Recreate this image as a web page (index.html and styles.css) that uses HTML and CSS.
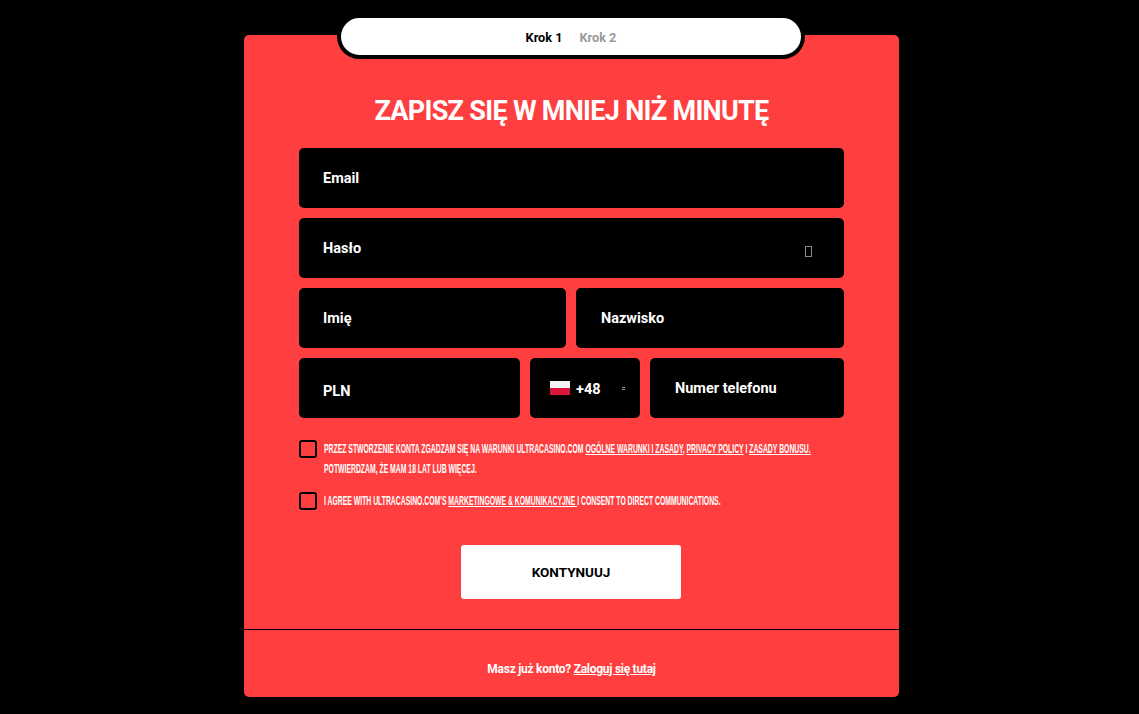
FILE: index.html
```html
<!DOCTYPE html>
<html lang="pl">
  <head>
    <meta charset="utf-8">
    <title>Rejestracja</title>
    <link rel="stylesheet" href="styles.css">
  </head>
  <body>
    <div class="card">
      <div class="steps">
        <span class="step active">Krok 1</span>
        <span class="step">Krok 2</span>
      </div>

      <form class="form">
        <h1 class="title">ZAPISZ SIĘ W MNIEJ NIŻ MINUTĘ</h1>

        <div class="row">
          <label class="field">Email</label>
        </div>
        <div class="row">
          <label class="field password">Hasło<span class="eye"></span></label>
        </div>
        <div class="row">
          <label class="field half">Imię</label>
          <label class="field half">Nazwisko</label>
        </div>
        <div class="row">
          <label class="field currency">PLN</label>
          <div class="field prefix">
            <svg class="flag" width="20" height="14" viewBox="0 0 20 14">
              <rect width="20" height="7" fill="#f4f4f4"/>
              <rect y="7" width="20" height="7" fill="#dc143c"/>
            </svg>
            <span>+48</span>
            <span class="arrows"></span>
          </div>
          <label class="field phone">Numer telefonu</label>
        </div>

        <div class="consent">
          <span class="check"></span>
          <p>Przez stworzenie konta zgadzam się na warunki ultracasino.com <a href="#">Ogólne warunki i zasady</a>, <a href="#">Privacy Policy</a> i <a href="#">Zasady bonusu.</a><br>Potwierdzam, że mam 18 lat lub więcej.</p>
        </div>
        <div class="consent">
          <span class="check"></span>
          <p>I agree with ultracasino.com's <a href="#">Marketingowe &amp; Komunikacyjne </a> i consent to direct communications.</p>
        </div>

        <button class="submit" type="button">KONTYNUUJ</button>
      </form>

      <div class="footer">
        Masz już konto? <a href="#">Zaloguj się tutaj</a>
      </div>
    </div>
  </body>
</html>
```

FILE: styles.css
```css
* {
  box-sizing: border-box;
}
body {
  margin: 0;
  background: #000;
  color: #fff;
  font-family: Roboto, "Noto Sans", sans-serif;
}
a {
  color: #fff;
}
.card {
  position: relative;
  width: 655px;
  margin: 35px 0 17px 244px;
  background: #ff3f3f;
  border-radius: 5px;
}
.steps {
  position: absolute;
  top: -21px;
  left: 93px;
  width: 468px;
  height: 45px;
  display: flex;
  justify-content: center;
  align-items: center;
  gap: 17px;
  padding-top: 1px;
  background: #fff;
  border: 4px solid #000;
  border-radius: 24px;
  font-size: 12.7px;
  font-weight: 700;
}
.step {
  color: #999;
}
.step.active {
  color: #000;
}
.form {
  padding: 55px 55px 30px;
  display: flex;
  flex-direction: column;
  gap: 10px;
}
.title {
  margin: 0 0 8px;
  height: 40px;
  font-size: 27px;
  line-height: 42px;
  font-weight: 700;
  letter-spacing: -0.7px;
  text-align: center;
}
.row {
  display: flex;
  gap: 10px;
}
.field {
  flex: 1;
  height: 60px;
  padding: 1px 24px 0;
  display: flex;
  align-items: center;
  background: #000;
  border-radius: 5px;
  font-size: 14.5px;
  font-weight: 700;
}
.password {
  justify-content: space-between;
  padding-right: 31px;
}
.eye {
  width: 7px;
  height: 11px;
  margin-top: 5px;
  margin-right: 1px;
  border: 1px solid #8a8a8a;
}
.half + .half {
  padding-left: 25px;
}
.currency {
  flex: 0 0 221px;
  padding-top: 6px;
}
.prefix {
  flex: 0 0 110px;
  padding: 0 0 0 20px;
  gap: 6px;
}
.prefix span:first-of-type {
  margin-top: 2px;
}
.flag {
  flex: none;
}
.arrows {
  width: 3px;
  height: 3px;
  margin-left: 15px;
  border-top: 1px solid #999;
  border-bottom: 1px solid #999;
}
.phone {
  padding-top: 0;
  padding-left: 25px;
}
.consent {
  display: flex;
  gap: 7px;
}
.row + .consent {
  margin-top: 11px;
}
.consent + .consent {
  margin-top: 2px;
}
.check {
  flex: none;
  width: 18px;
  height: 18px;
  margin-top: 1px;
  border: 2px solid #000;
  border-radius: 3px;
}
.consent p {
  flex: none;
  width: 790px;
  margin: 0;
  font-family: "Liberation Sans", sans-serif;
  font-size: 12px;
  line-height: 20px;
  font-weight: 700;
  text-transform: uppercase;
  white-space: nowrap;
  transform: scaleX(0.57);
  transform-origin: left;
}
.submit {
  align-self: center;
  width: 220px;
  height: 54px;
  margin-top: 24px;
  margin-right: 1px;
  background: #fff;
  border: 0;
  border-radius: 3px;
  color: #000;
  font-family: Roboto, "Noto Sans", sans-serif;
  font-size: 13.5px;
  font-weight: 700;
}
.footer {
  height: 68px;
  padding-top: 30px;
  border-top: 1px solid #000;
  text-align: center;
  font-size: 12px;
  line-height: 18px;
  font-weight: 700;
  letter-spacing: -0.27px;
}
```
